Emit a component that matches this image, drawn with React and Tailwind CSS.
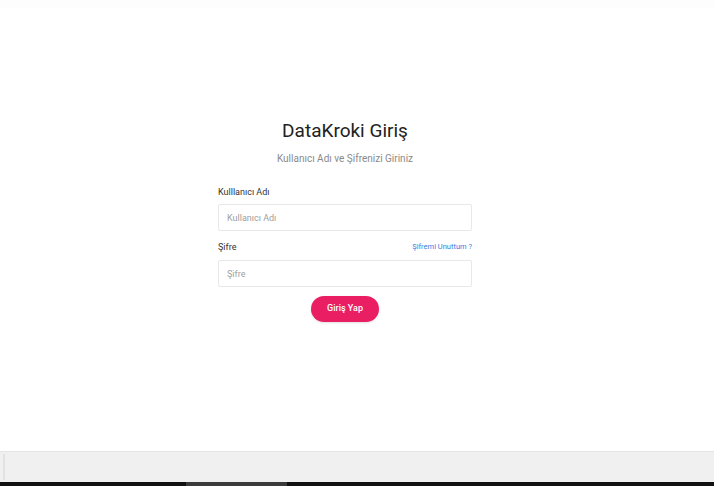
import { useState } from "react";

function App() {
  const [username, setUsername] = useState("");
  const [password, setPassword] = useState("");

  return (
    <div
      className="flex flex-col h-[486px] w-[714px] bg-white overflow-hidden"
      style={{ fontFamily: "Roboto, 'Liberation Sans', sans-serif" }}
    >
      <div className="h-[8px] bg-[#fdfdfd]"></div>
      <div className="flex-1 flex justify-center w-[690px] pt-[109px]">
        <form
          onSubmit={(e) => e.preventDefault()}
          className="flex flex-col w-[254px]"
        >
          <h2 className="text-[19px] leading-[28px] text-center text-[#222]">
            DataKroki Giriş
          </h2>
          <h3 className="text-[10px] leading-[16px] text-center text-[#8a8a8a] mt-[6px]">
            Kullanıcı Adı ve Şifrenizi Giriniz
          </h3>

          <label className="text-[9px] leading-[14px] text-[#333] mt-[18px]">
            Kulllanıcı Adı
          </label>
          <input
            type="text"
            placeholder="Kullanıcı Adı"
            value={username}
            onChange={(e) => setUsername(e.target.value)}
            className="mt-[5px] h-[27px] w-full border border-[#e8e8e8] rounded-[2px] px-[8px] text-[9px] text-[#333] placeholder:text-[#a0a0a0] outline-none"
          />

          <div className="flex items-end justify-between mt-[9px]">
            <label className="text-[9px] leading-[14px] text-[#333]">Şifre</label>
            <a href="#" className="text-[7.5px] leading-[12px] text-[#3b7ddd] mb-[1px]">
              Şifremi Unuttum ?
            </a>
          </div>
          <input
            type="password"
            placeholder="Şifre"
            value={password}
            onChange={(e) => setPassword(e.target.value)}
            className="mt-[6px] h-[27px] w-full border border-[#e8e8e8] rounded-[2px] px-[8px] text-[9px] text-[#333] placeholder:text-[#a0a0a0] outline-none"
          />

          <div className="flex justify-center mt-[9px]">
            <button
              type="submit"
              className="w-[68px] h-[26px] rounded-full bg-[#e91e63] text-white text-[9px] font-medium shadow-sm"
            >
              Giriş Yap
            </button>
          </div>
        </form>
      </div>

      <div className="h-[1px] bg-[#e4e4e4]"></div>
      <div className="h-[30px] bg-[#f0f0f0] flex items-stretch py-[2px] pl-[3px]">
        <div className="w-[2px] bg-[#e2e2e2]"></div>
      </div>
      <div className="h-[4px] bg-[#111] flex">
        <div className="ml-[186px] w-[101px] bg-[#3a3a3a]"></div>
      </div>
    </div>
  );
}

export default App;
